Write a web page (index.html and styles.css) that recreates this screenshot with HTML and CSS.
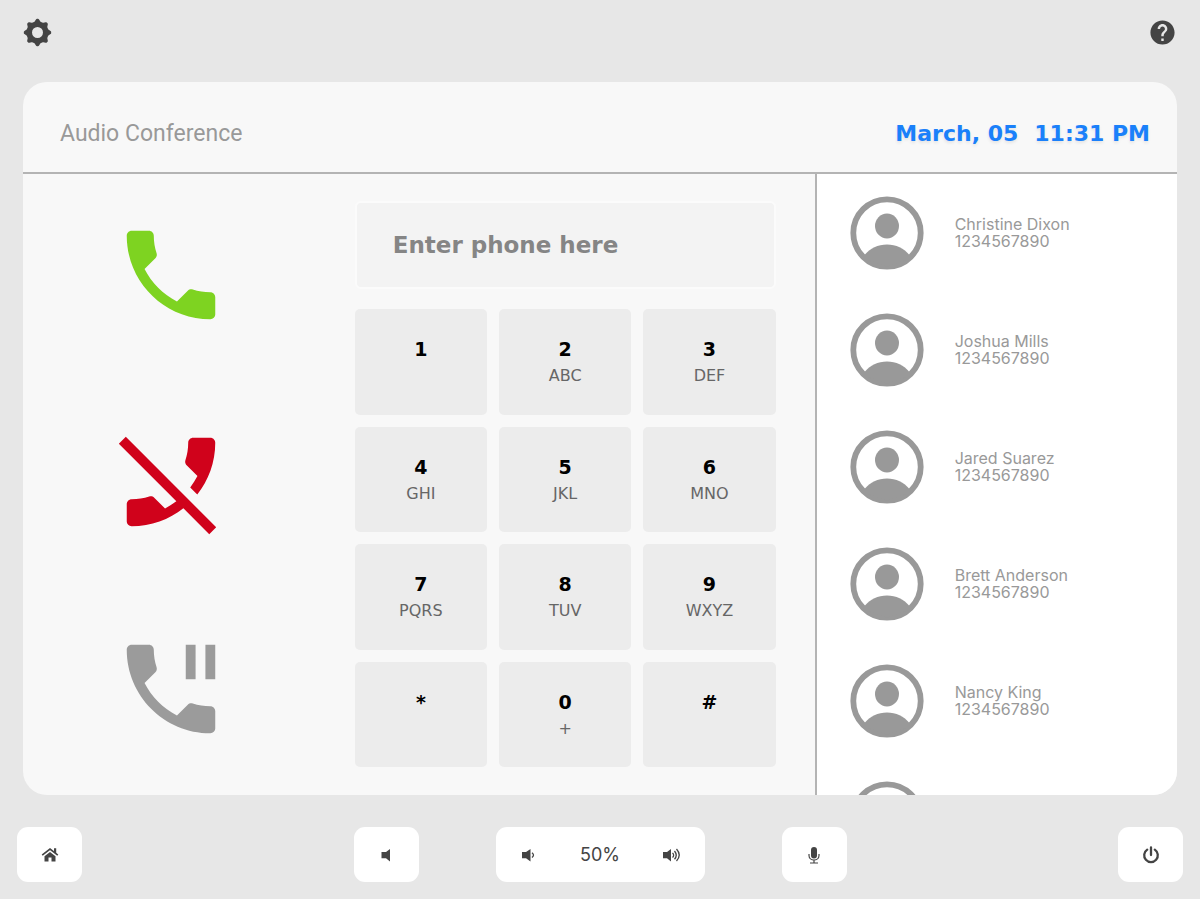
FILE: index.html
```html
<!DOCTYPE html>
<html lang="en">
<head>
<meta charset="utf-8">
<meta name="viewport" content="width=device-width, initial-scale=1">
<title>Audio Conference</title>
<link rel="stylesheet" href="styles.css">
</head>
<body>
<svg class="sprites" aria-hidden="true">
  <symbol id="avatar" viewBox="0 0 74 74">
    <circle cx="37" cy="37" r="33.700" fill="none" stroke="currentColor" stroke-width="5.800"/>
    <ellipse cx="37" cy="30" rx="12" ry="12.500"/>
    <path d="M14.500 59C20 52.500 28 48.500 37 48.500S54 52.500 59.500 59L56 64L37 71L18 64z"/>
  </symbol>
  <symbol id="tooth" viewBox="0 0 28 28">
    <path d="M11.700 5L13.600 2.100H14.400L16.300 5z" stroke="currentColor" stroke-width="2.600" stroke-linejoin="round"/>
  </symbol>
</svg>

<header class="topbar">
  <button class="icon-button" aria-label="Settings">
    <svg class="gear" viewBox="0 0 28 28">
      <circle cx="14" cy="14" r="8" fill="none" stroke="currentColor" stroke-width="5.400"/>
      <use href="#tooth" width="28" height="28"/>
      <use href="#tooth" width="28" height="28" transform="rotate(45 14 14)"/>
      <use href="#tooth" width="28" height="28" transform="rotate(90 14 14)"/>
      <use href="#tooth" width="28" height="28" transform="rotate(135 14 14)"/>
      <use href="#tooth" width="28" height="28" transform="rotate(180 14 14)"/>
      <use href="#tooth" width="28" height="28" transform="rotate(225 14 14)"/>
      <use href="#tooth" width="28" height="28" transform="rotate(270 14 14)"/>
      <use href="#tooth" width="28" height="28" transform="rotate(315 14 14)"/>
    </svg>
  </button>
  <button class="icon-button" aria-label="Help">
    <svg class="help" viewBox="0 0 24 24"><path d="M12 2C6.480 2 2 6.480 2 12s4.480 10 10 10 10-4.480 10-10S17.520 2 12 2zm1 17h-2v-2h2v2zm2.070-7.750l-.9.920C13.450 12.900 13 13.500 13 15h-2v-.5c0-1.100.45-2.100 1.170-2.830l1.240-1.260c.37-.36.59-.86.59-1.410 0-1.100-.9-2-2-2s-2 .9-2 2H8c0-2.210 1.790-4 4-4s4 1.790 4 4c0 .88-.36 1.680-.93 2.250z"/></svg>
  </button>
</header>

<main class="panel">
  <div class="panel-head">
    <h1 class="title">Audio Conference</h1>
    <div class="clock"><span>March, 05</span><span>11:31 PM</span></div>
  </div>
  <div class="panel-body">
    <section class="dialer">
      <div class="calls">
        <button class="call call-start" aria-label="Call">
          <svg viewBox="0 0 24 24"><path d="M6.620 10.790c1.440 2.830 3.760 5.140 6.590 6.590l2.200-2.200c.27-.27.67-.36 1.020-.24 1.120.37 2.330.57 3.570.57.55 0 1 .45 1 1V20c0 .55-.45 1-1 1-9.390 0-17-7.610-17-17 0-.55.45-1 1-1h3.500c.55 0 1 .45 1 1 0 1.250.2 2.450.57 3.570.11.35.03.74-.25 1.020l-2.200 2.200z"/></svg>
        </button>
        <button class="call call-end" aria-label="End call">
          <svg viewBox="0 0 24 24"><path d="M17.340 14.540l-1.430-1.430c.56-.73 1.050-1.500 1.470-2.320l-2.200-2.200c-.28-.28-.36-.67-.25-1.020.37-1.120.57-2.320.57-3.570 0-.55.45-1 1-1H20c.55 0 1 .45 1 1 0 3.980-1.370 7.640-3.660 10.540zm-2.820 2.810C11.630 19.640 7.970 21 4 21c-.55 0-1-.45-1-1v-3.490c0-.55.45-1 1-1 1.240 0 2.450-.2 3.570-.57.35-.12.75-.03 1.020.24l2.200 2.200c.81-.42 1.580-.9 2.300-1.460L1.390 4.220l1.420-1.410L21.190 21.200l-1.410 1.410-5.260-5.260z"/></svg>
        </button>
        <button class="call call-hold" aria-label="Hold call">
          <svg viewBox="0 0 24 24"><path d="M6.620 10.790c1.440 2.830 3.760 5.140 6.590 6.590l2.200-2.200c.27-.27.67-.36 1.020-.24 1.120.37 2.330.57 3.570.57.55 0 1 .45 1 1V20c0 .55-.45 1-1 1-9.390 0-17-7.610-17-17 0-.55.45-1 1-1h3.500c.55 0 1 .45 1 1 0 1.250.2 2.450.57 3.570.11.35.03.74-.25 1.020l-2.200 2.200zM15 3h2v7h-2zM19 3h2v7h-2z"/></svg>
        </button>
      </div>
      <div class="pad">
        <input class="phone" type="tel" placeholder="Enter phone here" aria-label="Phone number">
        <div class="keys">
          <button class="key"><b>1</b></button>
          <button class="key"><b>2</b><span>ABC</span></button>
          <button class="key"><b>3</b><span>DEF</span></button>
          <button class="key"><b>4</b><span>GHI</span></button>
          <button class="key"><b>5</b><span>JKL</span></button>
          <button class="key"><b>6</b><span>MNO</span></button>
          <button class="key"><b>7</b><span>PQRS</span></button>
          <button class="key"><b>8</b><span>TUV</span></button>
          <button class="key"><b>9</b><span>WXYZ</span></button>
          <button class="key"><b>*</b></button>
          <button class="key"><b>0</b><span>+</span></button>
          <button class="key"><b>#</b></button>
        </div>
      </div>
    </section>
    <ul class="contacts">
      <li class="contact"><svg class="avatar"><use href="#avatar"/></svg><p>Christine Dixon<br>1234567890</p></li>
      <li class="contact"><svg class="avatar"><use href="#avatar"/></svg><p>Joshua Mills<br>1234567890</p></li>
      <li class="contact"><svg class="avatar"><use href="#avatar"/></svg><p>Jared Suarez<br>1234567890</p></li>
      <li class="contact"><svg class="avatar"><use href="#avatar"/></svg><p>Brett Anderson<br>1234567890</p></li>
      <li class="contact"><svg class="avatar"><use href="#avatar"/></svg><p>Nancy King<br>1234567890</p></li>
      <li class="contact"><svg class="avatar"><use href="#avatar"/></svg></li>
    </ul>
  </div>
</main>

<footer class="bottombar">
  <button class="tile" aria-label="Home">
    <svg class="small" viewBox="0 0 18 18"><path d="M1.200 9.200L9 3L16.800 9.200" fill="none" stroke="currentColor" stroke-width="1.700"/><path d="M13 2.300h2.200v5.500L13 6zM3.500 10.200L9 5.900l5.500 4.300V15.500h-4V11.500h-3v4h-4z"/></svg>
  </button>
  <div class="audio">
    <button class="tile" aria-label="Mute">
      <svg class="small" viewBox="0 0 18 18"><path d="M4.500 6h4.500l4-3v12.500L9 12.200H4.500z"/></svg>
    </button>
    <div class="volume">
      <button class="step" aria-label="Volume down">
        <svg class="small" viewBox="0 0 18 18"><path d="M3 6h4l4.500-3v12.500L7 12.200H3z"/><path d="M13 6.700Q16 9 13 11.500" fill="none" stroke="currentColor" stroke-width="1.300"/></svg>
      </button>
      <span>50%</span>
      <button class="step" aria-label="Volume up">
        <svg class="small" viewBox="0 0 18 18"><path d="M0 6h4l4-3v12.500L4 12.200H0z"/><path d="M9.500 6.900Q11.800 9.200 9.500 11.500M11.500 5Q15 9.200 11.500 13.200M13.500 3Q19 9.200 13.500 15" fill="none" stroke="currentColor" stroke-width="1.300"/></svg>
      </button>
    </div>
    <button class="tile" aria-label="Microphone">
      <svg class="small" viewBox="0 0 18 18"><rect x="6" y="1" width="6" height="11.500" rx="3"/><path d="M4 8V9.500C4 15.500 14 15.500 14 9.500V8M9 14V16.500M5 17H13" fill="none" stroke="currentColor" stroke-width="1.200"/></svg>
    </button>
  </div>
  <button class="tile" aria-label="Power">
    <svg class="small" viewBox="0 0 18 18"><path d="M5.200 3.600A6.800 6.800 0 1 0 12.800 3.600M9 1.500V9" fill="none" stroke="currentColor" stroke-width="2.300" stroke-linecap="round"/></svg>
  </button>
</footer>
</body>
</html>
```
FILE: styles.css
```css
* { box-sizing: border-box; }

body {
  margin: 0;
  min-height: 100vh;
  display: flex;
  flex-direction: column;
  background: #e7e7e7;
  color: #444;
  font-family: Inter, "Liberation Sans", sans-serif;
}

button {
  margin: 0;
  padding: 0;
  border: 0;
  background: none;
  color: inherit;
  font: inherit;
  cursor: pointer;
}

svg { display: block; fill: currentColor; }

.sprites { position: absolute; width: 0; height: 0; }

.topbar {
  display: flex;
  justify-content: space-between;
  align-items: center;
  padding: 0 23px;
  height: 65px;
}
.gear { width: 29px; height: 29px; }
.help { width: 29px; height: 29px; }

.panel {
  flex: 1;
  display: flex;
  flex-direction: column;
  margin: 17px 23px 32px;
  border-radius: 24px;
  background: #f8f8f8;
  overflow: hidden;
}

.panel-head {
  display: flex;
  justify-content: space-between;
  align-items: center;
  height: 92px;
  padding: 12px 27px 0 37px;
  border-bottom: 2px solid #b4b4b4;
}
.title {
  margin: 0;
  color: #999;
  font-family: Roboto, sans-serif;
  font-size: 23px;
  font-weight: 400;
}
.clock {
  display: flex;
  gap: 16px;
  color: #1a80fa;
  font: bold 22px "DejaVu Sans", sans-serif;
  text-shadow: 0 2px 3px #e4e4e4;
}

.panel-body {
  flex: 1;
  display: grid;
  grid-template-columns: 1fr 31.4%;
}

.dialer {
  display: grid;
  grid-template-columns: 3fr 4fr;
  gap: 16px;
  padding-right: 39px;
}
.calls {
  display: flex;
  flex-direction: column;
  justify-content: space-between;
  align-items: center;
  padding: 42px 19px 47px 0;
}
.call svg { width: 118px; height: 118px; }
.call-start { color: #7ed321; }
.call-end { color: #d0021b; }
.call-hold { color: #9b9b9b; }

.pad {
  display: flex;
  flex-direction: column;
  gap: 20px;
  padding: 27px 0 28px;
}
.phone {
  width: 100%;
  height: 88px;
  padding: 0 36px;
  border: 2px solid #fbfbfb;
  border-radius: 6px;
  background: #f3f3f3;
  color: #444;
  font: bold 23px "DejaVu Sans", sans-serif;
}
.phone::placeholder { color: #858585; opacity: 1; }

.keys {
  flex: 1;
  display: grid;
  grid-template-columns: repeat(3, 1fr);
  grid-auto-rows: 1fr;
  gap: 12px;
}
.key {
  display: flex;
  flex-direction: column;
  align-items: center;
  gap: 4px;
  padding-top: 28px;
  border-radius: 5px;
  background: #ececec;
  font-family: "DejaVu Sans", sans-serif;
}
.key b { color: #000; font-size: 19px; line-height: 24px; }
.key span { color: #666; font-size: 16px; line-height: 22px; }

.contacts {
  height: 0;
  min-height: 100%;
  margin: 0;
  padding: 0 0 0 33px;
  border-left: 2px solid #b4b4b4;
  background: #fff;
  list-style: none;
  overflow: hidden;
}
.contact {
  display: flex;
  align-items: center;
  gap: 31px;
  height: 117px;
  color: #999;
  font-size: 16px;
  line-height: 17px;
}
.contact p { margin: 0; }
.avatar { width: 74px; height: 74px; }

.bottombar {
  display: flex;
  justify-content: space-between;
  padding: 0 17px 17px;
}
.audio { display: flex; gap: 77px; }
.tile,
.volume {
  display: flex;
  align-items: center;
  justify-content: center;
  height: 55px;
  border-radius: 11px;
  background: #fff;
}
.tile { width: 65px; }
.volume {
  width: 209px;
  justify-content: space-between;
  padding: 0 23px;
  font-size: 18px;
}
.small { width: 18px; height: 18px; }
```
